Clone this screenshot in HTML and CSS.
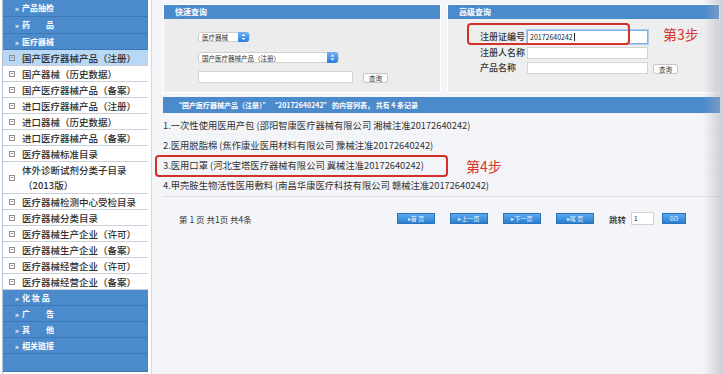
FILE: index.html
```html
<!DOCTYPE html>
<html lang="zh-CN">
<head>
    <meta charset="UTF-8">
    <title>医疗器械查询</title>
    <link rel="stylesheet" href="styles.css">
</head>
<body>
    <div class="page">
        <div class="sidebar">
            <div class="cat tall"><b>»</b>产品抽检</div>
            <div class="cat tall"><b>»</b>药　　品</div>
            <div class="cat"><b>»</b>医疗器械</div>
            <ul class="menu">
                <li class="on"><i class="ico"></i>国产医疗器械产品（注册）</li>
                <li><i class="ico"></i>国产器械（历史数据）</li>
                <li><i class="ico"></i>国产医疗器械产品（备案）</li>
                <li><i class="ico"></i>进口医疗器械产品（注册）</li>
                <li><i class="ico"></i>进口器械（历史数据）</li>
                <li><i class="ico"></i>进口医疗器械产品（备案）</li>
                <li><i class="ico"></i>医疗器械标准目录</li>
                <li class="two"><i class="ico"></i><span>体外诊断试剂分类子目录<br><em>（2013版）</em></span></li>
                <li><i class="ico"></i>医疗器械检测中心受检目录</li>
                <li><i class="ico"></i>医疗器械分类目录</li>
                <li><i class="ico"></i>医疗器械生产企业（许可）</li>
                <li><i class="ico"></i>医疗器械生产企业（备案）</li>
                <li><i class="ico"></i>医疗器械经营企业（许可）</li>
                <li><i class="ico"></i>医疗器械经营企业（备案）</li>
            </ul>
            <div class="cat"><b>»</b>化 妆 品</div>
            <div class="cat"><b>»</b>广　　告</div>
            <div class="cat"><b>»</b>其　　他</div>
            <div class="cat"><b>»</b>相关链接</div>
            <div class="cat blank"></div>
        </div>

        <div class="main">
            <div class="panels">
                <div class="panel quick">
                    <div class="panel-hd">快速查询</div>
                    <div class="quick-bd">
                        <div class="select short">
                            <span>医疗器械</span>
                            <svg class="arrows" width="11" height="10" viewBox="0 0 11 10"><path d="M3.5 4 L5.5 2 L7.5 4 Z M3.5 6 L5.5 8 L7.5 6 Z" fill="#fff"/></svg>
                        </div>
                        <div class="select long">
                            <span>国产医疗器械产品（注册）</span>
                            <svg class="arrows" width="11" height="11" viewBox="0 0 11 11"><path d="M3.5 4.5 L5.5 2.5 L7.5 4.5 Z M3.5 6.5 L5.5 8.5 L7.5 6.5 Z" fill="#fff"/></svg>
                        </div>
                        <div class="quick-row">
                            <div class="field wide"></div>
                            <button class="btn">查询</button>
                        </div>
                    </div>
                </div>

                <div class="panel adv">
                    <div class="panel-hd">高级查询</div>
                    <div class="adv-bd">
                        <div class="adv-row first">
                            <label>注册证编号</label>
                            <div class="field focus">20172640242<span class="caret"></span></div>
                        </div>
                        <div class="adv-row">
                            <label>注册人名称</label>
                            <div class="field"></div>
                        </div>
                        <div class="adv-row">
                            <label>产品名称</label>
                            <div class="field"></div>
                            <button class="btn">查询</button>
                        </div>
                    </div>
                </div>
            </div>

            <div class="results">
                <div class="results-hd">“国产医疗器械产品（注册）” “20172640242” 的内容列表， 共有 4 条记录</div>
                <ul class="list">
                    <li>1.一次性使用医用产包 (邵阳智康医疗器械有限公司 湘械注准20172640242)</li>
                    <li>2.医用脱脂棉 (焦作康业医用材料有限公司 豫械注准20172640242)</li>
                    <li>3.医用口罩 (河北宝塔医疗器械有限公司 冀械注准20172640242)</li>
                    <li>4.甲壳胺生物活性医用敷料 (南昌华康医疗科技有限公司 赣械注准20172640242)</li>
                </ul>
                <div class="pager">
                    <span class="pager-info">第 1 页 共1页 共4条</span>
                    <a class="pbtn">▸首 页</a>
                    <a class="pbtn">▸上一页</a>
                    <a class="pbtn">▸下一页</a>
                    <a class="pbtn">▸尾 页</a>
                    <span class="jump">跳转</span>
                    <div class="field page-no">1</div>
                    <a class="pbtn go">GO</a>
                </div>
            </div>
        </div>
    </div>

    <!-- red annotations drawn over the screenshot -->
    <div class="mark mark-3"></div>
    <div class="step step-3">第3步</div>
    <div class="mark mark-4"></div>
    <div class="step step-4">第4步</div>
</body>
</html>
```

FILE: styles.css
```css
* {
    box-sizing: border-box;
}

body {
    margin: 0;
    width: 723px;
    height: 374px;
    overflow: hidden;
    position: relative;
    font-family: "Noto Sans CJK SC", "Noto Sans", sans-serif;
    color: #333;
    background: #fff;
}

/* right edge shade of the photo */
body::after {
    content: "";
    position: absolute;
    top: 0;
    right: 0;
    width: 20px;
    height: 100%;
    background: linear-gradient(to right, rgba(200, 200, 210, 0), rgba(170, 172, 185, 0.55));
}

.page {
    display: flex;
    height: 374px;
}

/* sidebar */
.sidebar {
    width: 146px;
    margin-left: 2px;
    flex: none;
    border-left: 1px solid #b3c2d3;
    background: #fff;
}

.cat {
    height: 16px;
    line-height: 15px;
    padding-left: 12px;
    background: #4b8bcc;
    border-bottom: 1px solid #3c78b8;
    color: #fff;
    font-size: 8px;
    font-weight: bold;
    white-space: pre;
}

.cat.tall {
    height: 17px;
    line-height: 16px;
}

.cat b {
    margin-right: 3px;
    font-family: "Liberation Serif", serif;
}

.cat.blank {
    height: 18px;
}

.menu {
    list-style: none;
    margin: 0;
    padding: 0;
}

.menu li {
    height: 16px;
    display: flex;
    align-items: center;
    padding-left: 6px;
    border-bottom: 1px solid #cbcfd5;
    font-size: 9.5px;
    font-weight: 500;
    white-space: nowrap;
    color: #2e2e2e;
}

.menu li.on {
    background: #b9d8f5;
}

.menu li.two {
    height: 32px;
    line-height: 15px;
}

.menu li em {
    font-style: normal;
    margin-left: 1px;
}

.ico {
    position: relative;
    flex: none;
    width: 6px;
    height: 6px;
    margin-right: 7px;
    border: 1px solid #8c8c8c;
}

.ico::after {
    content: "";
    position: absolute;
    left: 1px;
    right: 1px;
    top: 1.5px;
    height: 1px;
    background: #8c8c8c;
}

/* main area */
.main {
    flex: 1;
    margin-left: 3px;
    padding: 4px 3px 0 11px;
    border-left: 1px solid #d6d9df;
    background: #f4f5f9;
}

.panels {
    display: flex;
    gap: 6px;
    height: 89px;
}

.panel {
    border: 1px solid #fff;
    background: #ececec;
}

.panel.quick {
    width: 278px;
}

.panel.adv {
    flex: 1;
    background: #eeeeef;
}

.panel-hd {
    height: 14px;
    line-height: 14px;
    padding-left: 11px;
    background: #4b8bcc;
    color: #fff;
    font-size: 8px;
    font-weight: bold;
}

.quick-bd {
    display: flex;
    flex-direction: column;
    align-items: flex-start;
    padding: 13px 0 0 34px;
}

.select {
    display: flex;
    align-items: center;
    background: #fff;
    border: 1px solid #cfcfcf;
    border-radius: 3px;
    font-size: 6.5px;
    color: #333;
}

.select span {
    padding-left: 3px;
}

.select .arrows {
    margin-left: auto;
    background: linear-gradient(#72b3f5, #2a7ce0);
    border-radius: 0 3px 3px 0;
}

.select.short {
    width: 52px;
    height: 10px;
}

.select.long {
    width: 141px;
    height: 11px;
    margin-top: 10px;
}

.quick-row {
    display: flex;
    align-items: flex-end;
    margin-top: 8px;
}

.field {
    width: 121px;
    height: 12px;
    background: #fff;
    border: 1px solid #d4d4d4;
    font-size: 7px;
    line-height: 10px;
    padding-left: 2px;
    color: #222;
}

.field.wide {
    width: 155px;
}

.field.focus {
    height: 14px;
    line-height: 12px;
    border-color: #7fb0e8;
    box-shadow: 0 0 0 1px #acccf1;
}

.caret {
    display: inline-block;
    width: 1px;
    height: 8px;
    margin-left: 1px;
    vertical-align: -1px;
    background: #222;
}

.btn {
    height: 10px;
    width: 25px;
    margin-left: 10px;
    padding: 0;
    background: #fdfdfd;
    border: 1px solid #c6c6c6;
    border-radius: 2px;
    font-family: inherit;
    font-size: 6.5px;
    line-height: 8px;
    color: #333;
}

.adv-bd {
    padding: 9px 0 0 32px;
}

.adv-row {
    display: flex;
    align-items: center;
    height: 15px;
}

.adv-row.first {
    height: 17px;
}

.adv-row label {
    width: 47px;
    font-size: 9px;
    font-weight: 500;
    color: #333;
}

.adv-row .btn {
    margin-left: 5px;
    margin-top: 2px;
}

/* results */
.results {
    margin-top: 4px;
}

.results-hd {
    height: 16px;
    line-height: 16px;
    padding-left: 12px;
    background: #4b8bcc;
    color: #fff;
    font-size: 7px;
    font-weight: bold;
}

.list {
    list-style: none;
    margin: 0;
    padding: 2px 0 1px;
    border-bottom: 1px dotted #c9ccd2;
}

.list li {
    height: 20px;
    line-height: 20px;
    font-size: 9.3px;
    color: #333;
    border-bottom: 1px solid #eef0f4;
    white-space: nowrap;
}

.list li:last-child {
    border-bottom: none;
}

.pager {
    display: flex;
    align-items: center;
    height: 13px;
    margin-top: 15px;
    padding-left: 16px;
    font-size: 8.5px;
}

.pager-info {
    width: 218px;
}

.pbtn {
    width: 38px;
    height: 11px;
    margin-right: 15px;
    background: linear-gradient(#5aaaf0, #2c7fd0);
    border: 1px solid #2a72bb;
    color: #e8f3ff;
    font-size: 6px;
    line-height: 9px;
    text-align: center;
}

.jump {
    font-size: 8.5px;
    font-weight: 500;
}

.field.page-no {
    width: 23px;
    height: 13px;
    margin-left: 5px;
    margin-right: 8px;
    font-size: 6.5px;
}

.pbtn.go {
    width: 24px;
    margin-right: 0;
}

/* annotations */
.mark {
    position: absolute;
    border: 2px solid #d2302b;
    border-radius: 4px;
}

.mark-3 {
    left: 467px;
    top: 23px;
    width: 163px;
    height: 22px;
}

.mark-4 {
    left: 155px;
    top: 155px;
    width: 293px;
    height: 22px;
}

.step {
    position: absolute;
    color: #d7342c;
    font-size: 14px;
    line-height: 16px;
}

.step-3 {
    left: 663px;
    top: 26px;
}

.step-4 {
    left: 466px;
    top: 158px;
}
```
